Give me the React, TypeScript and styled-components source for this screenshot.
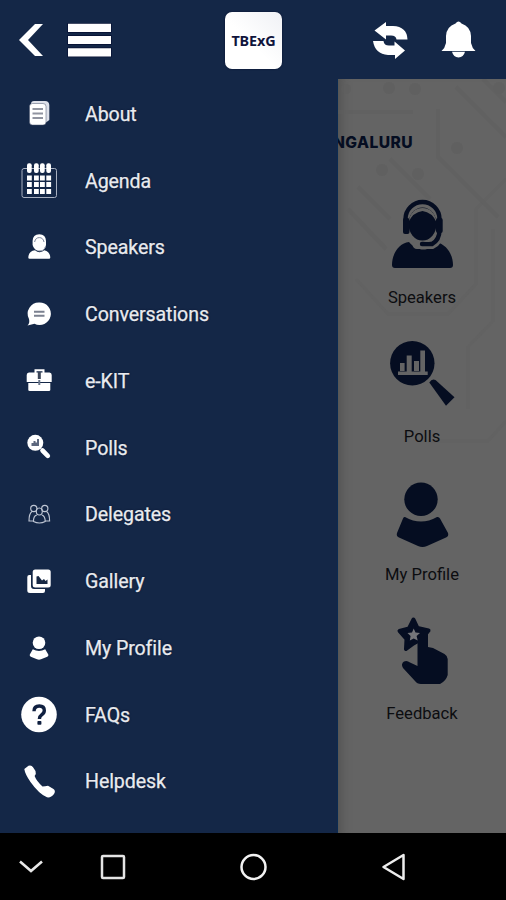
import React from 'react';
import styled, { createGlobalStyle } from 'styled-components';

const NAVY = '#142747';
const DIM_NAVY = '#050d21';
const DIM_PAGE = '#646464';

const GlobalStyle = createGlobalStyle`
  * { box-sizing: border-box; }
  body { margin: 0; background: #000; font-family: Roboto, "Liberation Sans", sans-serif; }
`;

const Screen = styled.div`
  width: 506px;
  height: 900px;
  display: flex;
  flex-direction: column;
  overflow: hidden;
  background: ${NAVY};
`;

const Header = styled.header`
  height: 79px;
  flex: none;
  display: flex;
  align-items: center;
  padding: 1px 30px 0 19px;
`;

const IconButton = styled.button<{ $after?: number }>`
  display: flex;
  padding: 0;
  border: 0;
  background: none;
  margin-right: ${(p) => p.$after ?? 0}px;
  svg { display: block; }
`;

const Logo = styled.div`
  width: 57px;
  height: 57px;
  flex: none;
  margin-right: 91px;
  border-radius: 7px;
  background: linear-gradient(45deg, #fff 45%, #f0f1f5);
  box-shadow: 0 0 2px #040c2b;
  display: flex;
  align-items: center;
  justify-content: center;
  color: #10143c;
  font: 700 14.4px "Noto Sans", sans-serif;
  letter-spacing: -0.1px;
`;

const Body = styled.div`
  height: 754px;
  flex: none;
  display: flex;
`;

const Drawer = styled.nav`
  width: 338px;
  flex: none;
  padding-top: 2px;
  border-right: 1px solid #0b2b52;
`;

const MenuRow = styled.a`
  height: 66.75px;
  display: flex;
  align-items: center;
  padding-left: 21px;
  gap: 28px;
  color: #e9ebef;
  font-size: 19.6px;
  letter-spacing: -0.1px;
  -webkit-text-stroke: 0.25px #e9ebef;
  text-shadow: 0 0 2px #06102c;
  svg { display: block; flex: none; }
`;

const Page = styled.main`
  position: relative;
  flex: 1;
  overflow: hidden;
  background: ${DIM_PAGE};
  box-shadow: inset 12px 0 10px -8px #545454;
`;

const Circuit = styled.svg`
  position: absolute;
  inset: 0;
  opacity: 0.7;
`;

const PageContent = styled.div`
  position: relative;
  display: flex;
  flex-direction: column;
`;

const City = styled.h1`
  margin: 53px 93px 0 0;
  height: 22px;
  display: flex;
  justify-content: flex-end;
  color: ${DIM_NAVY};
  font: 800 15.6px/22px Inter, sans-serif;
  letter-spacing: 0.45px;
`;

const Tile = styled.div`
  height: 138.5px;
  display: flex;
  flex-direction: column;
  align-items: center;
  gap: 17px;
  color: #0c0d10;
  font-size: 16.6px;
  line-height: 22px;
  letter-spacing: 0;
  svg { display: block; }
`;

const Tiles = styled.section`
  margin-top: 44px;
`;

const SystemBar = styled.footer`
  height: 67px;
  flex: none;
  display: flex;
  align-items: center;
  background: #000;
  padding-left: 19px;
`;

type Paint = { cut: string };

const SpeakerArt = ({ cut }: Paint) => (
  <>
    <path d="M6 67 C6 56 13 45 23 44 C31 54 44 54 51 44 C61 47 67 57 67 67 Q67 70 64 70 H9 Q6 70 6 67Z" />
    <path d="M31 46.5 H46 Q53 43 53 35" fill="none" stroke={cut} strokeWidth="9" strokeLinecap="round" />
    <ellipse cx="36.5" cy="26" rx="14" ry="16.5" />
    <path d="M19.5 30 V21 a17 17 0 0 1 34 0 V32 Q53.5 42 46 46 H36" fill="none" stroke="currentColor" strokeWidth="4.4" strokeLinecap="round" />
    <path d="M22 25 Q25 10 36.5 10 Q48 10 51 25 Q46 14 36.5 13 Q27 14 22 25Z" fill={cut} />
    <path d="M50 34 Q49 41 43 44 H37 Q46 41 50 34Z" fill={cut} />
    <rect x="17" y="20" width="6.5" height="16" rx="2" />
    <rect x="50" y="20" width="6.7" height="15" rx="2" />
  </>
);

const PollsArt = ({ cut }: Paint) => (
  <>
    <circle cx="26.3" cy="26.2" r="22.2" />
    <path fill={cut} d="M12 34.5H41.7V38H12ZM14 26h4.6v8H14ZM20.7 18.5h5v16h-5ZM28 24h5v10h-5ZM34.3 13.5h4.7v21h-4.7Z" />
    <path d="M43.3 45.5 Q46 41 49.5 43 L68.5 60.3 L60 68.7Z" />
  </>
);

const ProfileArt = () => (
  <>
    <circle cx="35" cy="24.3" r="16.7" />
    <path d="M19 42 Q35 51 51 42 Q53 41.5 54 43.5 L62 58 Q63 61 60 62.5 L41 71 Q36.5 73 32 71 L13 62.5 Q10 61 11 58 L17 43.5Q17.5 41.5 19 42Z" />
  </>
);

const FeedbackArt = ({ cut }: Paint) => (
  <>
    <path strokeWidth="4" stroke="currentColor" strokeLinejoin="round" d="M27.5 5.5 L31.5 14 L42.5 16.5 L36 24.5 L27.5 29.5 L20 35 L20.5 25 L13.5 17 L23 14.5Z" />
    <path d="M31.5 24 V18 Q36 12 42 19 V33 L47 34 L58.5 40 Q61.7 42 61.7 45 V61 Q60 67 54 70 H35 Q31 70 29 67 L17 54 Q14.5 50 18 47.5 Q21 46 24 48.5 L31.5 52Z" />
    <path fill={cut} d="M27.7 14.5 L29.5 18.5 L34 19 L30.6 22 L31.7 26.5 L27.7 24.5 L23.8 26.5 L24.6 22 L21.5 19 L26 18.5Z" />
  </>
);

const Scaled = ({ t, children }: { t: string; children: React.ReactNode }) => (
  <g transform={t}>{children}</g>
);

const menu: { label: string; art: React.ReactNode }[] = [
  {
    label: 'About',
    art: (
      <>
        <path d="M13 5h11q4 0 4.3 4v15l-4 3V10L22 8H10q0-3 3-3Z" fill="#dde0e9" />
        <rect x="8.5" y="7.5" width="16.5" height="21.5" rx="3" stroke="#46516b" strokeWidth=".5" />
        <path d="M11.5 13h10.5M11.5 17.5h10.5M11.5 22h10.5" stroke="#9094a0" strokeWidth="2" />
      </>
    ),
  },
  {
    label: 'Agenda',
    art: (
      <>
        <rect x="1" y="5.5" width="34.5" height="29" rx="2" fill="none" stroke="#a9b1c1" />
        {[6, 13, 19, 25.3].map((x) => (
          <g key={x}>
            <rect x={x} y="0.3" width="4.7" height="9.7" rx="2" />
            {[12.5, 19, 26].map((y) => <rect key={y} x={x} y={y} width="4.8" height="5" />)}
          </g>
        ))}
      </>
    ),
  },
  {
    label: 'Speakers',
    art: (
      <>
        <path d="M7.3 27.5C7.3 23.5 10 20.7 14 20.3Q18.5 24 23.3 20.3C27 21 29.3 24 29.3 27.5Q29.3 28.8 28 28.8H8.6Q7.3 28.8 7.3 27.5Z" />
        <path d="M18.3 4.3Q24.8 4.5 25 11V15Q24 20.5 18.5 21Q13 20.5 11.6 15V11Q11.8 4.5 18.3 4.3Z" />
        <path d="M13.6 12Q14.5 7.6 18.3 7.6T23 12" fill="none" stroke="#7d869a" strokeWidth="1" />
        <path d="M17.5 20.8H21Q23.6 19.5 24.3 17" fill="none" stroke="#9aa2b2" strokeWidth="1" />
      </>
    ),
  },
  {
    label: 'Conversations',
    art: (
      <>
        <path d="M18.5 5.4a11.3 11.3 0 1 1-5 21.4L6.5 28.5Q9 26 8 22A11.3 11.3 0 0 1 18.5 5.4Z" />
        <path d="M13 14.8h10.5M13 18.8h10.5" stroke="#7b8190" strokeWidth="2" />
      </>
    ),
  },
  {
    label: 'e-KIT',
    art: (
      <>
        <path d="M14.5 10V7.3h8V10" fill="none" stroke="currentColor" strokeWidth="2" />
        <path d="M8 9.5H28.5Q30.7 9.5 30.7 12V19H5.7V12Q5.7 9.5 8 9.5ZM7.3 20H29.3V27q0 1-1.5 1H8.8q-1.5 0-1.5-1Z" />
        <path d="M18.3 9v7" stroke="#3c4659" strokeWidth="3" />
        <path d="M18.3 17v5" stroke="#69758a" strokeWidth="2" />
      </>
    ),
  },
  {
    label: 'Polls',
    art: (
      <>
        <circle cx="14.3" cy="12.8" r="8" />
        <path d="M10.5 16V13H12.5V11H14.5V12.5H16V9H18V16Z" fill="#5d687e" />
        <path d="M21.5 20.5L26.8 25.8" stroke="currentColor" strokeWidth="4.6" strokeLinecap="round" />
      </>
    ),
  },
  {
    label: 'Delegates',
    art: (
      <g fill="none" stroke="#bec5d3" strokeWidth="1.15">
        <circle cx="12.8" cy="11.5" r="3.1" /><circle cx="23.8" cy="11.5" r="3.1" />
        <ellipse cx="18.3" cy="14.5" rx="3" ry="3.5" />
        <path d="M11 14.5q-3 2-3 9.5h4.5M25.6 14.5q3 2 3 9.5h-4.5M15.8 18q-3.5 1-3.3 6.5 6 3 11.7 0 0-5.5-3.4-6.5" />
      </g>
    ),
  },
  {
    label: 'Gallery',
    art: (
      <>
        <path d="M10 11H8.3Q6.3 11 6.3 13V26.5Q6.3 29 9 29H22Q24 29 24 27V25H13Q10 25 10 22Z" />
        <rect x="11.7" y="5.5" width="18" height="18" rx="2.5" />
        <path d="M15.5 20V12.5L17.5 12L21 16.5L23 15L24.5 17L26.5 15.5V20Z" fill="#172844" />
      </>
    ),
  },
  {
    label: 'My Profile',
    art: (
      <>
        <circle cx="18" cy="12.8" r="6.3" />
        <path d="M11.8 19.2Q18 22.6 24.2 19.2L27.3 24.5Q27.8 26 26.3 26.8L20 29.3Q18 30 16 29.3L9.8 26.8Q8.3 26 8.8 24.5Z" />
      </>
    ),
  },
  {
    label: 'FAQs',
    art: (
      <>
        <circle cx="18" cy="17.5" r="17.8" />
        <path d="M13 14.2q0-5.2 5.3-5.2 5 0 5 4.5 0 2.5-2.7 4.4-2.2 1.5-2.2 4" fill="none" stroke="#102040" strokeWidth="3.4" />
        <rect x="16.4" y="24" width="4" height="3.8" rx=".8" fill="#102040" />
      </>
    ),
  },
  {
    label: 'Helpdesk',
    art: <path d="M3.3 5 L7.5 1.7 Q10.5.6 12.2 3.5 L14.5 7 Q15.5 9.5 13.6 12 Q15.5 17 21.5 22.5 Q24 22.5 27 21.8 L32.5 25 Q35 27 33 30 Q30 34 26 33.3 Q18 30 9.5 18 Q4 10 3.3 5Z" />,
  },
];

const tiles = [
  { label: 'Speakers', art: <SpeakerArt cut={DIM_PAGE} /> },
  { label: 'Polls', art: <PollsArt cut={DIM_PAGE} /> },
  { label: 'My Profile', art: <ProfileArt /> },
  { label: 'Feedback', art: <FeedbackArt cut="#747579" /> },
];

export default function App() {
  return (
    <>
      <GlobalStyle />
      <Screen>
        <Header>
          <IconButton aria-label="Back" $after={25}>
            <svg width="24" height="34" fill="#fff"><path d="M0 17 L16 1 H24 L9 17 L24 33 H16Z" /></svg>
          </IconButton>
          <IconButton aria-label="Menu" $after={114}>
            <svg width="43" height="34" fill="#fff" overflow="visible">
              <path stroke="#061033" strokeWidth="1.4" paintOrder="stroke" d="M0 .7H43V9H0ZM0 13H43V21H0ZM0 25.3H43V33.5H0Z" />
            </svg>
          </IconButton>
          <Logo>TBExG</Logo>
          <IconButton aria-label="Refresh" $after={33}>
            <svg width="35" height="38" fill="#fff">
              <path d="M1.5 9.5 L13 1 V5 H20 Q34 5.5 34.5 18.5 H23.5 Q23 14.5 18 14.5 H13 V18.5Z" />
              <path d="M0 20 H10.5 Q11 24.5 16 24.5 H21.5 V20.5 L32 29.5 L22 38 V34 H15 Q2 33 0 20Z" />
            </svg>
          </IconButton>
          <IconButton aria-label="Notifications">
            <svg width="35" height="38" fill="#fff">
              <path d="M14.5 2.5 Q17.5-1.5 20.5 2.5 Q29.5 5.5 30 15 V22 Q31 27 34.5 30 H.5 Q4 27 5 22 V15 Q5.5 5.5 14.5 2.5ZM11 30.8H24Q22.5 36.5 17.5 36.5T11 30.8Z" />
            </svg>
          </IconButton>
        </Header>
        <Body>
          <Drawer>
            {menu.map((m) => (
              <MenuRow key={m.label}>
                <svg width="36" height="36" viewBox="0 0 36 36" fill="currentColor" color="#fff" overflow="visible">{m.art}</svg>
                <span>{m.label}</span>
              </MenuRow>
            ))}
          </Drawer>
          <Page>
            <Circuit width="168" height="400" fill="none" stroke="#5f5f5f" strokeWidth="5">
              <path d="M0 33H75M100 30V78L160 138M118 8L168 58M52 80L92 120M20 108L52 140M145 0L168 23M10 130L48 170" strokeWidth="4" opacity=".65" />
              <path d="M168 100L138 130V205L110 235H50L18 200M130 330V268L155 242V150M168 342L150 362H90" strokeWidth="3" opacity=".35" />
              <g fill="#5f5f5f" stroke="none" opacity=".8">
                <circle cx="8" cy="10" r="5" /><circle cx="51" cy="9" r="6" /><circle cx="77" cy="10" r="6" />
                <circle cx="161" cy="9" r="6" /><circle cx="119" cy="69" r="6" /><circle cx="44" cy="91" r="6" />
                <circle cx="80" cy="95" r="6" />
              </g>
            </Circuit>
            <PageContent>
              <City>NGALURU</City>
              <Tiles>
                {tiles.map((t) => (
                  <Tile key={t.label}>
                    <svg width="72" height="72" viewBox="0 0 72 72" fill="currentColor" color={DIM_NAVY} overflow="visible">{t.art}</svg>
                    <span>{t.label}</span>
                  </Tile>
                ))}
              </Tiles>
            </PageContent>
          </Page>
        </Body>
        <SystemBar>
          <IconButton aria-label="Hide" $after={57}>
            <svg width="24" height="28" fill="none" stroke="#e8e8e8" strokeWidth="2.6"><path d="M1 8.5 L12 18 L23 8.5" /></svg>
          </IconButton>
          <IconButton aria-label="Recent apps" $after={114}>
            <svg width="26" height="28" fill="none" stroke="#e4e4e4" strokeWidth="2.5"><rect x="2" y="3" width="22" height="22" rx="1" /></svg>
          </IconButton>
          <IconButton aria-label="Home" $after={114}>
            <svg width="27" height="28" fill="none" stroke="#f2f2f2" strokeWidth="2.5"><circle cx="13.5" cy="14" r="12" /></svg>
          </IconButton>
          <IconButton aria-label="Back">
            <svg width="26" height="28" fill="none" stroke="#ededed" strokeWidth="2.5" strokeLinejoin="round"><path d="M2.5 14 L22.5 2 V26Z" /></svg>
          </IconButton>
        </SystemBar>
      </Screen>
    </>
  );
}
